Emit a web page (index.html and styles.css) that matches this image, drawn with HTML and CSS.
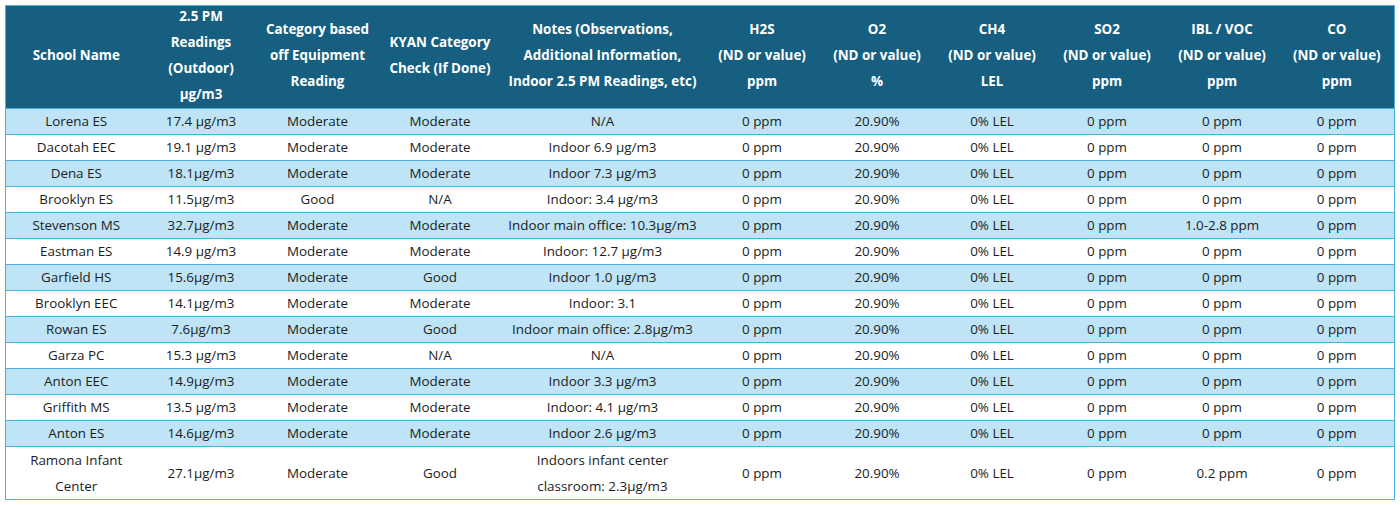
FILE: index.html
```html
<!DOCTYPE html>
<html lang="en">
<head>
<meta charset="utf-8">
<title>School Air Quality Readings</title>
<link rel="stylesheet" href="styles.css">
</head>
<body>
<table class="readings">
  <colgroup>
    <col class="c-school">
    <col class="c-pm">
    <col class="c-cat">
    <col class="c-kyan">
    <col class="c-notes">
    <col class="c-gas">
    <col class="c-gas">
    <col class="c-gas">
    <col class="c-gas">
    <col class="c-gas">
    <col class="c-gas">
  </colgroup>
  <thead>
    <tr>
      <th><span class="hd">School Name</span></th>
      <th><span class="hd">2.5 PM<br>Readings<br>(Outdoor)<br>µg/m3</span></th>
      <th><span class="hd">Category based<br>off Equipment<br>Reading</span></th>
      <th><span class="hd">KYAN Category<br>Check (If Done)</span></th>
      <th><span class="hd">Notes (Observations,<br>Additional Information,<br>Indoor 2.5 PM Readings, etc)</span></th>
      <th><span class="hd">H2S<br>(ND or value)<br>ppm</span></th>
      <th><span class="hd">O2<br>(ND or value)<br>%</span></th>
      <th><span class="hd">CH4<br>(ND or value)<br>LEL</span></th>
      <th><span class="hd">SO2<br>(ND or value)<br>ppm</span></th>
      <th><span class="hd">IBL / VOC<br>(ND or value)<br>ppm</span></th>
      <th><span class="hd">CO<br>(ND or value)<br>ppm</span></th>
    </tr>
  </thead>
  <tbody>
    <tr><td>Lorena ES</td><td>17.4 µg/m3</td><td>Moderate</td><td>Moderate</td><td>N/A</td><td>0 ppm</td><td>20.90%</td><td>0% LEL</td><td>0 ppm</td><td>0 ppm</td><td>0 ppm</td></tr>
    <tr><td>Dacotah EEC</td><td>19.1 µg/m3</td><td>Moderate</td><td>Moderate</td><td>Indoor 6.9 µg/m3</td><td>0 ppm</td><td>20.90%</td><td>0% LEL</td><td>0 ppm</td><td>0 ppm</td><td>0 ppm</td></tr>
    <tr><td>Dena ES</td><td>18.1µg/m3</td><td>Moderate</td><td>Moderate</td><td>Indoor 7.3 µg/m3</td><td>0 ppm</td><td>20.90%</td><td>0% LEL</td><td>0 ppm</td><td>0 ppm</td><td>0 ppm</td></tr>
    <tr><td>Brooklyn ES</td><td>11.5µg/m3</td><td>Good</td><td>N/A</td><td>Indoor: 3.4 µg/m3</td><td>0 ppm</td><td>20.90%</td><td>0% LEL</td><td>0 ppm</td><td>0 ppm</td><td>0 ppm</td></tr>
    <tr><td>Stevenson MS</td><td>32.7µg/m3</td><td>Moderate</td><td>Moderate</td><td>Indoor main office: 10.3µg/m3</td><td>0 ppm</td><td>20.90%</td><td>0% LEL</td><td>0 ppm</td><td>1.0-2.8 ppm</td><td>0 ppm</td></tr>
    <tr><td>Eastman ES</td><td>14.9 µg/m3</td><td>Moderate</td><td>Moderate</td><td>Indoor: 12.7 µg/m3</td><td>0 ppm</td><td>20.90%</td><td>0% LEL</td><td>0 ppm</td><td>0 ppm</td><td>0 ppm</td></tr>
    <tr><td>Garfield HS</td><td>15.6µg/m3</td><td>Moderate</td><td>Good</td><td>Indoor 1.0 µg/m3</td><td>0 ppm</td><td>20.90%</td><td>0% LEL</td><td>0 ppm</td><td>0 ppm</td><td>0 ppm</td></tr>
    <tr><td>Brooklyn EEC</td><td>14.1µg/m3</td><td>Moderate</td><td>Moderate</td><td>Indoor: 3.1</td><td>0 ppm</td><td>20.90%</td><td>0% LEL</td><td>0 ppm</td><td>0 ppm</td><td>0 ppm</td></tr>
    <tr><td>Rowan ES</td><td>7.6µg/m3</td><td>Moderate</td><td>Good</td><td>Indoor main office: 2.8µg/m3</td><td>0 ppm</td><td>20.90%</td><td>0% LEL</td><td>0 ppm</td><td>0 ppm</td><td>0 ppm</td></tr>
    <tr><td>Garza PC</td><td>15.3 µg/m3</td><td>Moderate</td><td>N/A</td><td>N/A</td><td>0 ppm</td><td>20.90%</td><td>0% LEL</td><td>0 ppm</td><td>0 ppm</td><td>0 ppm</td></tr>
    <tr><td>Anton EEC</td><td>14.9µg/m3</td><td>Moderate</td><td>Moderate</td><td>Indoor 3.3 µg/m3</td><td>0 ppm</td><td>20.90%</td><td>0% LEL</td><td>0 ppm</td><td>0 ppm</td><td>0 ppm</td></tr>
    <tr><td>Griffith MS</td><td>13.5 µg/m3</td><td>Moderate</td><td>Moderate</td><td>Indoor: 4.1 µg/m3</td><td>0 ppm</td><td>20.90%</td><td>0% LEL</td><td>0 ppm</td><td>0 ppm</td><td>0 ppm</td></tr>
    <tr><td>Anton ES</td><td>14.6µg/m3</td><td>Moderate</td><td>Moderate</td><td>Indoor 2.6 µg/m3</td><td>0 ppm</td><td>20.90%</td><td>0% LEL</td><td>0 ppm</td><td>0 ppm</td><td>0 ppm</td></tr>
    <tr class="tall"><td>Ramona Infant<br>Center</td><td>27.1µg/m3</td><td>Moderate</td><td>Good</td><td>Indoors infant center<br>classroom: 2.3µg/m3</td><td>0 ppm</td><td>20.90%</td><td>0% LEL</td><td>0 ppm</td><td>0.2 ppm</td><td>0 ppm</td></tr>
  </tbody>
</table>
</body>
</html>
```
FILE: styles.css
```css
html, body {
  margin: 0;
  padding: 0;
  background: #ffffff;
}
body {
  padding: 5px 0 0 5px;
  font-family: "Open Sans", "Noto Sans", sans-serif;
  color: #1c1c1c;
}
.readings {
  border-collapse: collapse;
  table-layout: fixed;
  width: 1388px;
  border: 1px solid #4faedd;
}
.c-school { width: 141px; }
.c-pm { width: 109px; }
.c-cat { width: 124px; }
.c-kyan { width: 121px; }
.c-notes { width: 204px; }
.c-gas { width: 115px; }

.readings th {
  background: #175f80;
  color: #ffffff;
  font-weight: 700;
  font-size: 13.4px;
  line-height: 26px;
  height: 102px;
  padding: 0;
  text-align: center;
  vertical-align: middle;
  white-space: nowrap;
  border-bottom: 1px solid #4faedd;
}
.readings th .hd {
  display: block;
  margin-top: -4px;
}
.readings td {
  font-size: 13.4px;
  line-height: 25px;
  height: 25px;
  padding: 0;
  text-align: center;
  vertical-align: middle;
  white-space: nowrap;
  border-bottom: 1px solid #4faedd;
}
.readings tbody tr:nth-child(odd) td {
  background: #bee4f5;
}
.readings tbody tr:nth-child(even) td {
  background: #ffffff;
}
.readings tr.tall td {
  line-height: 26px;
  height: 51px;
}
```
